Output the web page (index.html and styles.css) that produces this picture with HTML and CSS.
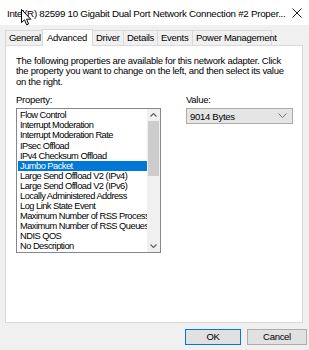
FILE: index.html
```html
<!DOCTYPE html>
<html>
<head>
<meta charset="utf-8">
<link rel="stylesheet" href="styles.css">
</head>
<body>
<div class="window">
  <div class="titlebar">
    <span class="title">Intel(R) 82599 10 Gigabit Dual Port Network Connection #2 Proper...</span>
    <svg class="close" width="10" height="10" viewBox="0 0 10 10"><path d="M0.5 0.5 L9.5 9.5 M9.5 0.5 L0.5 9.5" stroke="#222" stroke-width="1"/></svg>
  </div>
  <div class="tabs">
    <div class="tab first">General</div>
    <div class="tab active">Advanced</div>
    <div class="tab">Driver</div>
    <div class="tab">Details</div>
    <div class="tab">Events</div>
    <div class="tab">Power Management</div>
  </div>
  <div class="panel">
    <p class="intro">The following properties are available for this network adapter. Click the property you want to change on the left, and then select its value on the right.</p>
    <div class="cols">
      <div class="col-prop">
        <div class="label">Property:</div>
        <div class="listbox">
          <ul class="items">
            <li>Flow Control</li>
            <li>Interrupt Moderation</li>
            <li>Interrupt Moderation Rate</li>
            <li>IPsec Offload</li>
            <li>IPv4 Checksum Offload</li>
            <li class="sel">Jumbo Packet</li>
            <li>Large Send Offload V2 (IPv4)</li>
            <li>Large Send Offload V2 (IPv6)</li>
            <li>Locally Administered Address</li>
            <li>Log Link State Event</li>
            <li>Maximum Number of RSS Processors</li>
            <li>Maximum Number of RSS Queues</li>
            <li>NDIS QOS</li>
            <li>No Description</li>
          </ul>
          <div class="scrollbar">
            <svg class="arrow" width="13" height="12" viewBox="0 0 13 12"><path d="M3.5 7.5 L6.5 4.5 L9.5 7.5" fill="none" stroke="#606060" stroke-width="1.2"/></svg>
            <div class="track"><div class="thumb"></div></div>
            <svg class="arrow" width="13" height="12" viewBox="0 0 13 12"><path d="M3.5 4.5 L6.5 7.5 L9.5 4.5" fill="none" stroke="#606060" stroke-width="1.2"/></svg>
          </div>
        </div>
      </div>
      <div class="col-val">
        <div class="label">Value:</div>
        <div class="combo">
          <span>9014 Bytes</span>
          <svg width="9" height="6" viewBox="0 0 9 6"><path d="M0.5 0.5 L4.5 4.5 L8.5 0.5" fill="none" stroke="#707070" stroke-width="1"/></svg>
        </div>
      </div>
    </div>
  </div>
  <div class="buttons">
    <div class="btn default">OK</div>
    <div class="btn">Cancel</div>
  </div>
  <svg class="cursor" width="11" height="17" viewBox="0 0 11 17"><path d="M0.5 0.5 L0.5 13.5 L3.5 10.8 L5.6 15.8 L7.6 15 L5.6 10.2 L9.8 10.2 Z" fill="#fff" stroke="#000" stroke-width="1" stroke-linejoin="miter"/></svg>
</div>
</body>
</html>
```

FILE: styles.css
```css
html, body {
  margin: 0;
  padding: 0;
}
body {
  width: 309px;
  height: 350px;
  overflow: hidden;
  background: #f0f0f0;
  font-family: "Liberation Sans", Arial, sans-serif;
  font-size: 9.5px;
  letter-spacing: -0.28px;
  color: #000;
}
.window {
  position: relative;
  width: 309px;
  height: 350px;
}
.titlebar {
  height: 25px;
  background: #fff;
  display: flex;
  align-items: center;
  justify-content: space-between;
  padding: 0 7px 0 7px;
  box-sizing: border-box;
}
.title {
  font-size: 9.75px;
  letter-spacing: -0.26px;
  color: #000;
  white-space: nowrap;
  padding-top: 1px;
}
.tabs {
  display: flex;
  align-items: flex-end;
  height: 20px;
  margin-left: 5px;
  box-sizing: border-box;
}
.tab {
  height: 15px;
  line-height: 14px;
  border: 1px solid #d9d9d9;
  border-bottom: none;
  border-left: none;
  padding: 0 3px 0 3px;
  background: #f0f0f0;
  box-sizing: border-box;
  white-space: nowrap;
}
.tab.first {
  border-left: 1px solid #d9d9d9;
  width: 38px;
}
.tab.active {
  height: 17px;
  line-height: 15px;
  background: #fff;
  border-left: 1px solid #d9d9d9;
  margin-left: -1px;
  margin-bottom: -1px;
  position: relative;
  width: 51px;
  padding: 0 4px;
}
.tabs .tab:nth-child(3) { width: 31px; }
.tabs .tab:nth-child(4) { width: 34px; }
.tabs .tab:nth-child(5) { width: 35px; }
.tabs .tab:nth-child(6) { width: 79px; }
.panel {
  margin: 0 6px 0 5px;
  height: 278px;
  background: #fff;
  border: 1px solid #d9d9d9;
  box-sizing: border-box;
  padding: 10px 10px 0 10px;
}
.intro {
  margin: 0;
  line-height: 10.4px;
  width: 278px;
}
.cols {
  display: flex;
  margin-top: 8px;
}
.label {
  line-height: 10px;
  height: 10px;
}
.col-prop {
  width: 145px;
}
.listbox {
  margin-top: 3px;
  width: 145px;
  height: 145px;
  border: 1px solid #828790;
  box-sizing: border-box;
  display: flex;
  overflow: hidden;
}
.items {
  list-style: none;
  margin: 0;
  padding: 1px 0 0 1px;
  flex: 1;
  overflow: hidden;
  font-size: 9.3px;
  letter-spacing: -0.52px;
}
.items li {
  height: 10.1px;
  line-height: 10px;
  padding-left: 2px;
  white-space: nowrap;
  overflow: hidden;
}
.items li.sel {
  background: #0078d7;
  color: #fff;
}
.scrollbar {
  width: 13px;
  background: #f0f0f0;
  display: flex;
  flex-direction: column;
}
.arrow {
  display: block;
  flex: none;
}
.track {
  flex: 1;
  position: relative;
}
.thumb {
  margin: 0 1px;
  height: 55px;
  background: #cdcdcd;
}
.col-val {
  margin-left: 25px;
}
.combo {
  margin-top: 3px;
  width: 107px;
  height: 16px;
  background: #e5e5e5;
  border: 1px solid #acacac;
  box-sizing: border-box;
  display: flex;
  align-items: center;
  justify-content: space-between;
  padding: 0 5px 0 3px;
}
.buttons {
  display: flex;
  justify-content: flex-end;
  gap: 6px;
  margin-top: 6px;
  margin-right: 2px;
}
.btn {
  width: 56px;
  height: 16px;
  background: #e1e1e1;
  border: 1px solid #adadad;
  box-sizing: border-box;
  text-align: center;
  line-height: 14px;
}
.btn:last-child {
  width: 60px;
}
.btn.default {
  border: 1px solid #0078d7;
}
.cursor {
  position: absolute;
  left: 21px;
  top: 9px;
}
```
